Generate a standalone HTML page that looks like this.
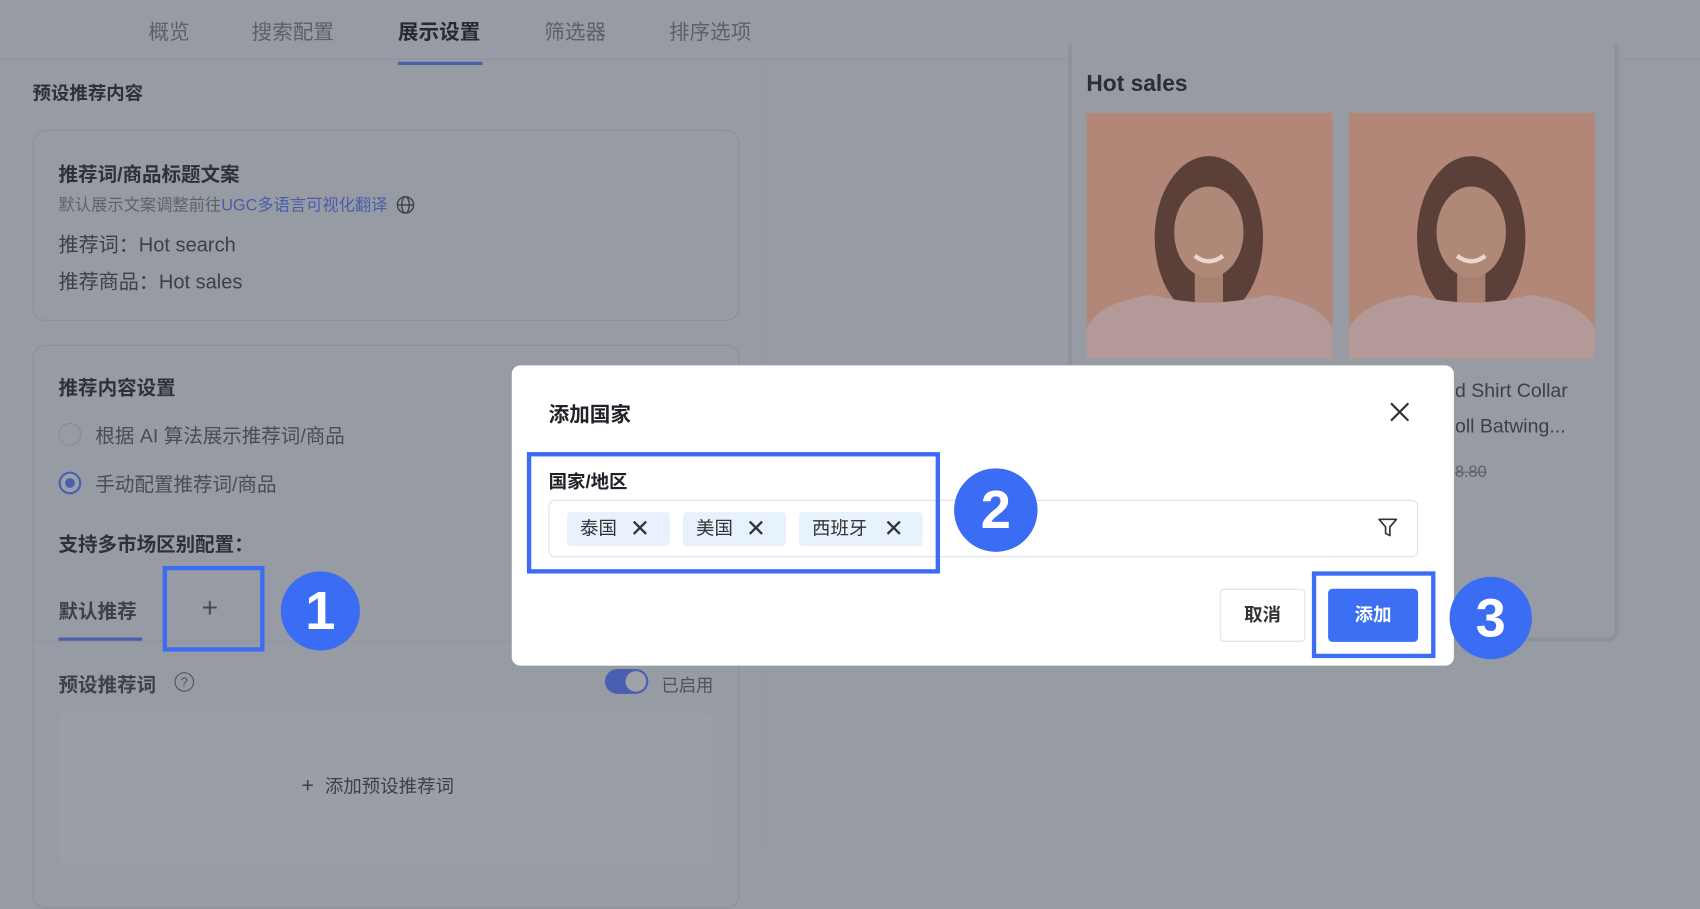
<!DOCTYPE html>
<html><head><meta charset="utf-8"><style>
*{margin:0;padding:0;box-sizing:border-box}
html,body{width:1700px;height:850px;overflow:hidden;background:#979ba4}
#w{position:absolute;left:0;top:0;width:1568px;height:784px;transform:scale(1.08418);transform-origin:0 0;font-family:"Liberation Sans","Noto Sans CJK SC",sans-serif;color:#2c313b}
.a{position:absolute;white-space:nowrap}
.b{font-weight:bold}
.circ{position:absolute;border-radius:50%;background:#3b6df4;color:#fff;font-weight:bold;font-size:50px;text-align:center;font-family:"Liberation Sans",sans-serif}
.ann{position:absolute;border:4px solid #3b6df4}
.tag{position:absolute;top:472px;height:32px;background:#e8f2fd;border-radius:4px;font-size:17px;line-height:32px;padding-left:12px;color:#333}
</style></head><body><div id="w">
<div class="a" style="left:0;top:0;width:1568px;height:55px;border-bottom:1px solid #8f939c"></div>
<div class="a" style="left:137px;top:15px;font-size:19px;color:#5b606a">概览</div>
<div class="a" style="left:232px;top:15px;font-size:19px;color:#5b606a">搜索配置</div>
<div class="a b" style="left:367px;top:15px;font-size:19px;color:#262a33">展示设置</div>
<div class="a" style="left:502px;top:15px;font-size:19px;color:#5b606a">筛选器</div>
<div class="a" style="left:617px;top:15px;font-size:19px;color:#5b606a">排序选项</div>
<div class="a" style="left:367px;top:57px;width:78px;height:3px;background:#4a5fb0"></div>
<div class="a" style="left:703px;top:56px;width:1px;height:728px;background:#93979f"></div>
<div class="a b" style="left:30px;top:72px;font-size:17px">预设推荐内容</div>
<div class="a" style="left:30px;top:120px;width:652px;height:176px;border:1px solid #8b8f99;border-radius:12px"></div>
<div class="a b" style="left:54px;top:147px;font-size:18px">推荐词/商品标题文案</div>
<div class="a" style="left:54px;top:178px;font-size:15px;color:#5d626c">默认展示文案调整前往<span style="color:#4b5da6">UGC多语言可视化翻译</span>
<svg width="18" height="18" viewBox="0 0 18 18" style="vertical-align:-4px;margin-left:3px"><circle cx="9" cy="9" r="7.5" fill="none" stroke="#3b404a" stroke-width="1.3"/><ellipse cx="9" cy="9" rx="3.5" ry="7.5" fill="none" stroke="#3b404a" stroke-width="1.3"/><path d="M1.5 9h15" stroke="#3b404a" stroke-width="1.3"/></svg></div>
<div class="a" style="left:54px;top:212px;font-size:18.5px;color:#3b404a">推荐词：Hot search</div>
<div class="a" style="left:54px;top:246px;font-size:18.5px;color:#3b404a">推荐商品：Hot sales</div>
<div class="a" style="left:30px;top:318px;width:652px;height:520px;border:1px solid #8b8f99;border-radius:12px"></div>
<div class="a b" style="left:54px;top:344px;font-size:18px">推荐内容设置</div>
<div class="a" style="left:54px;top:390px;width:21px;height:21px;border-radius:50%;border:1.5px solid #868a93"></div>
<div class="a" style="left:88px;top:388px;font-size:18px;color:#474c56">根据 AI 算法展示推荐词/商品</div>
<div class="a" style="left:54px;top:435px;width:21px;height:21px;border-radius:50%;border:2px solid #4a5fb0;background:#9ca0a9"></div>
<div class="a" style="left:60px;top:441px;width:9px;height:9px;border-radius:50%;background:#4a5fb0"></div>
<div class="a" style="left:88px;top:433px;font-size:18px;color:#474c56">手动配置推荐词/商品</div>
<div class="a b" style="left:54px;top:488px;font-size:18px">支持多市场区别配置：</div>
<div class="a b" style="left:54px;top:550px;font-size:18px;color:#3b404a">默认推荐</div>
<div class="a" style="left:31px;top:591px;width:650px;height:1px;background:#8f939c"></div>
<div class="a" style="left:54px;top:588px;width:77px;height:3px;background:#4a5fb0"></div>
<div class="a" style="left:186px;top:545px;font-size:26px;color:#454a54;font-weight:300">+</div>
<div class="ann" style="left:150px;top:522px;width:94px;height:79px"></div>
<div class="circ" style="left:259px;top:527px;width:73px;height:73px;line-height:73px">1</div>
<div class="a b" style="left:54px;top:618px;font-size:18px;color:#3b404a">预设推荐词</div>
<div class="a" style="left:161px;top:620px;width:18px;height:18px;border-radius:50%;border:1.3px solid #4d525c;font-size:12px;text-align:center;line-height:16px;color:#4d525c">?</div>
<div class="a" style="left:558px;top:617px;width:40px;height:23px;border-radius:12px;background:#4a5fb0"></div>
<div class="a" style="left:577px;top:619px;width:19px;height:19px;border-radius:50%;background:#9ea2ab"></div>
<div class="a" style="left:610px;top:619px;font-size:16px;color:#4d525c">已启用</div>
<div class="a" style="left:54px;top:658px;width:604px;height:140px;border-radius:8px;background:#9a9ea7"></div>
<div class="a" style="left:278px;top:711px;font-size:17px;color:#3b404a"><span style="font-size:20px;margin-right:10px">+</span>添加预设推荐词</div>
<div class="a" style="left:985px;top:40px;width:508px;height:552px;border:4px solid #8e929b;border-top:none;border-radius:0 0 10px 10px;background:#979ba4"></div>
<div class="a b" style="left:1002px;top:66px;font-size:21px;color:#2a2e36;font-family:'Liberation Sans',sans-serif">Hot sales</div>
<svg class="a" style="left:1002px;top:104px" width="470" height="227" viewBox="0 0 470 227">
<defs><g id="p"><rect width="227" height="227" fill="#b28778"/><ellipse cx="113" cy="115" rx="50" ry="75" fill="#5a4038"/><path d="M0 227V200Q10 175 60 168Q113 182 167 168Q217 175 227 200V227Z" fill="#b39a99"/><rect x="100" y="140" width="26" height="35" fill="#a8806f"/><ellipse cx="113" cy="110" rx="32" ry="42" fill="#b08878"/><path d="M100 132Q113 142 126 132" stroke="#e8d8d0" stroke-width="4" fill="none"/></g></defs>
<use href="#p"/><use href="#p" x="242"/></svg>
<div class="a" style="left:1342px;top:350px;font-size:18px;color:#3b404a">d Shirt Collar</div>
<div class="a" style="left:1342px;top:383px;font-size:18px;color:#3b404a">oll Batwing...</div>
<div class="a" style="left:1342px;top:427px;font-size:15px;color:#5d626c;text-decoration:line-through">8.80</div>
<div class="a" style="left:472px;top:337px;width:869px;height:277px;background:#fff;border-radius:8px"></div>
<div class="a b" style="left:506px;top:368px;font-size:19px;color:#1f2329">添加国家</div>
<svg class="a" style="left:1281px;top:370px" width="20" height="20" viewBox="0 0 20 20"><path d="M2 2L18 18M18 2L2 18" stroke="#333" stroke-width="2"/></svg>
<div class="a b" style="left:506px;top:430px;font-size:17px;color:#1f2329">国家/地区</div>
<div class="a" style="left:506px;top:461px;width:802px;height:53px;border:1px solid #dcdfe6;border-radius:6px"></div>
<div class="tag" style="left:523px;width:95px">泰国<span style="position:absolute;left:58px;top:0;font-size:22px">✕</span></div>
<div class="tag" style="left:630px;width:95px">美国<span style="position:absolute;left:58px;top:0;font-size:22px">✕</span></div>
<div class="tag" style="left:737px;width:114px">西班牙<span style="position:absolute;left:78px;top:0;font-size:22px">✕</span></div>
<svg class="a" style="left:1270px;top:477px" width="20" height="20" viewBox="0 0 20 20"><path d="M2 2H18L12 9V17L8 15V9Z" fill="none" stroke="#333" stroke-width="1.5" stroke-linejoin="round"/></svg>
<div class="ann" style="left:486px;top:417px;width:381px;height:112px"></div>
<div class="circ" style="left:880px;top:432px;width:77px;height:77px;line-height:77px">2</div>
<div class="a" style="left:1125px;top:543px;width:79px;height:49px;border:1px solid #dcdfe6;border-radius:4px;font-size:17px;text-align:center;line-height:47px;font-weight:bold;color:#333">取消</div>
<div class="a" style="left:1225px;top:543px;width:83px;height:49px;background:#3d6ff5;border-radius:4px;font-size:17px;text-align:center;line-height:49px;font-weight:bold;color:#fff">添加</div>
<div class="ann" style="left:1210px;top:527px;width:114px;height:80px"></div>
<div class="circ" style="left:1337px;top:532px;width:76px;height:76px;line-height:76px">3</div>
</div></body></html>
